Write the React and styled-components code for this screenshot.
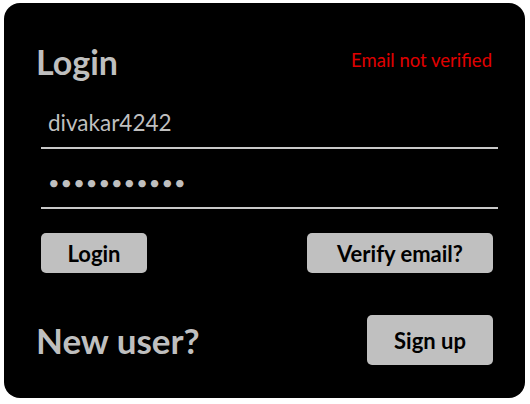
import React from 'react';
import styled, { createGlobalStyle } from 'styled-components';

const GlobalStyle = createGlobalStyle`
    html, body {
        margin: 0;
        padding: 0;
        background: #ffffff;
    }
    body {
        font-family: Lato, 'Liberation Sans', sans-serif;
    }
`;

const Card = styled.div`
    box-sizing: border-box;
    width: 521px;
    height: 395px;
    margin: 3px 0 0 4px;
    padding: 37px 32px 0 32px;
    background-color: #000;
    border-radius: 16px;
    display: flex;
    flex-direction: column;
`;

const Row = styled.div`
    display: flex;
    justify-content: space-between;
    align-items: center;
    margin-top: ${({ top }) => top || '0px'};
    margin-right: ${({ right }) => right || '0px'};
`;

const Title = styled.h1`
    margin: 0;
    font-size: 34px;
    font-weight: 700;
    color: #bfbfbf;
    line-height: 44px;
`;

const Error = styled.span`
    font-size: 18.5px;
    color: #e00000;
    margin: 0 1px 4px 0;
`;

const Form = styled.form`
    display: flex;
    flex-direction: column;
    margin: 0 0 0 5px;
    width: 457px;
`;

const Field = styled.input`
    box-sizing: border-box;
    width: 100%;
    height: ${({ first }) => (first ? '59px' : '60px')};
    margin-top: ${({ first }) => (first ? '6px' : '0')};
    padding: 8px 0 0 7px;
    background: transparent;
    border: none;
    border-bottom: 2px solid #c8c8c8;
    outline: none;
    color: #bfbfbf;
    font-family: Lato, 'Liberation Sans', sans-serif;
    font-size: ${({ type }) => (type === 'password' ? '20px' : '22.5px')};
    letter-spacing: ${({ type }) => (type === 'password' ? '1px' : '0')};
`;

const Button = styled.button`
    box-sizing: border-box;
    height: ${({ tall }) => (tall ? '50px' : '40px')};
    width: ${({ w }) => w};
    padding: 0;
    border: none;
    border-radius: 5px;
    background-color: #c0c0c0;
    color: #000;
    font-family: Lato, 'Liberation Sans', sans-serif;
    font-size: 22px;
    font-weight: 700;
    cursor: pointer;
`;

const Prompt = styled.h2`
    margin: 0;
    font-size: 35px;
    font-weight: 700;
    color: #bfbfbf;
`;

export default function App() {
    return (
        <>
            <GlobalStyle />
            <Card>
                <Row>
                    <Title>Login</Title>
                    <Error>Email not verified</Error>
                </Row>
                <Form onSubmit={e => e.preventDefault()}>
                    <Field first type="text" defaultValue="divakar4242" />
                    <Field type="password" defaultValue="12345678901" />
                    <Row top="24px" right="5px">
                        <Button w="106px" type="submit">
                            Login
                        </Button>
                        <Button w="186px" type="button">
                            Verify email?
                        </Button>
                    </Row>
                </Form>
                <Row top="42px">
                    <Prompt>New user?</Prompt>
                    <Button tall w="126px" type="button">
                        Sign up
                    </Button>
                </Row>
            </Card>
        </>
    );
}
